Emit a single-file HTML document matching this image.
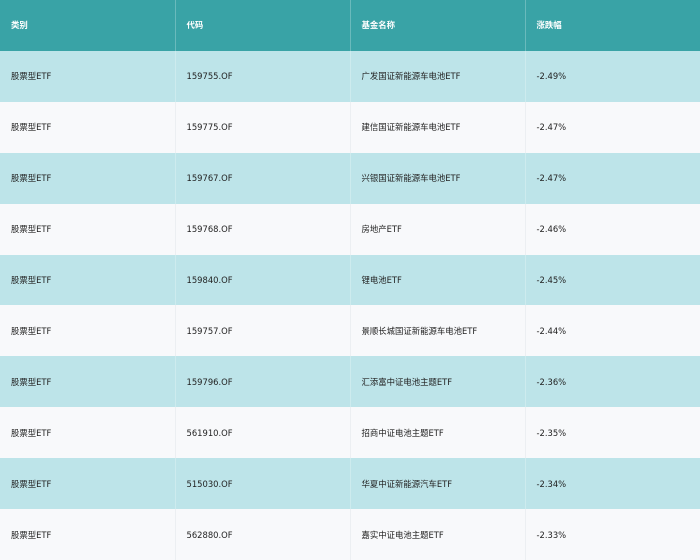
<!DOCTYPE html>
<html><head><meta charset="utf-8"><style>
body{margin:0;width:700px;height:560px;overflow:hidden;font-family:"DejaVu Sans","Noto Sans CJK SC",sans-serif;font-size:8.4px;color:#222;}
table{border-collapse:collapse;width:700px;height:560px;table-layout:fixed}
td,th{padding:0 0 0 11px;text-align:left;border-right:1px solid rgba(255,255,255,0.25);height:50.9px;box-sizing:border-box}
th{background:#39a3a6;color:#fff;font-weight:bold}
tr:nth-child(odd) td{background:#bde4e9}
tr:nth-child(even) td{background:#f8f9fb;border-right:1px solid #eceff2}
</style></head><body>
<table>
<colgroup><col style="width:175px"><col style="width:175px"><col style="width:175px"><col style="width:175px"></colgroup>
<thead><tr><th>类别</th><th>代码</th><th>基金名称</th><th>涨跌幅</th></tr></thead>
<tbody>
<tr><td>股票型ETF</td><td>159755.OF</td><td>广发国证新能源车电池ETF</td><td>-2.49%</td></tr>
<tr><td>股票型ETF</td><td>159775.OF</td><td>建信国证新能源车电池ETF</td><td>-2.47%</td></tr>
<tr><td>股票型ETF</td><td>159767.OF</td><td>兴银国证新能源车电池ETF</td><td>-2.47%</td></tr>
<tr><td>股票型ETF</td><td>159768.OF</td><td>房地产ETF</td><td>-2.46%</td></tr>
<tr><td>股票型ETF</td><td>159840.OF</td><td>锂电池ETF</td><td>-2.45%</td></tr>
<tr><td>股票型ETF</td><td>159757.OF</td><td>景顺长城国证新能源车电池ETF</td><td>-2.44%</td></tr>
<tr><td>股票型ETF</td><td>159796.OF</td><td>汇添富中证电池主题ETF</td><td>-2.36%</td></tr>
<tr><td>股票型ETF</td><td>561910.OF</td><td>招商中证电池主题ETF</td><td>-2.35%</td></tr>
<tr><td>股票型ETF</td><td>515030.OF</td><td>华夏中证新能源汽车ETF</td><td>-2.34%</td></tr>
<tr><td>股票型ETF</td><td>562880.OF</td><td>嘉实中证电池主题ETF</td><td>-2.33%</td></tr>
</tbody></table>
</body></html>
